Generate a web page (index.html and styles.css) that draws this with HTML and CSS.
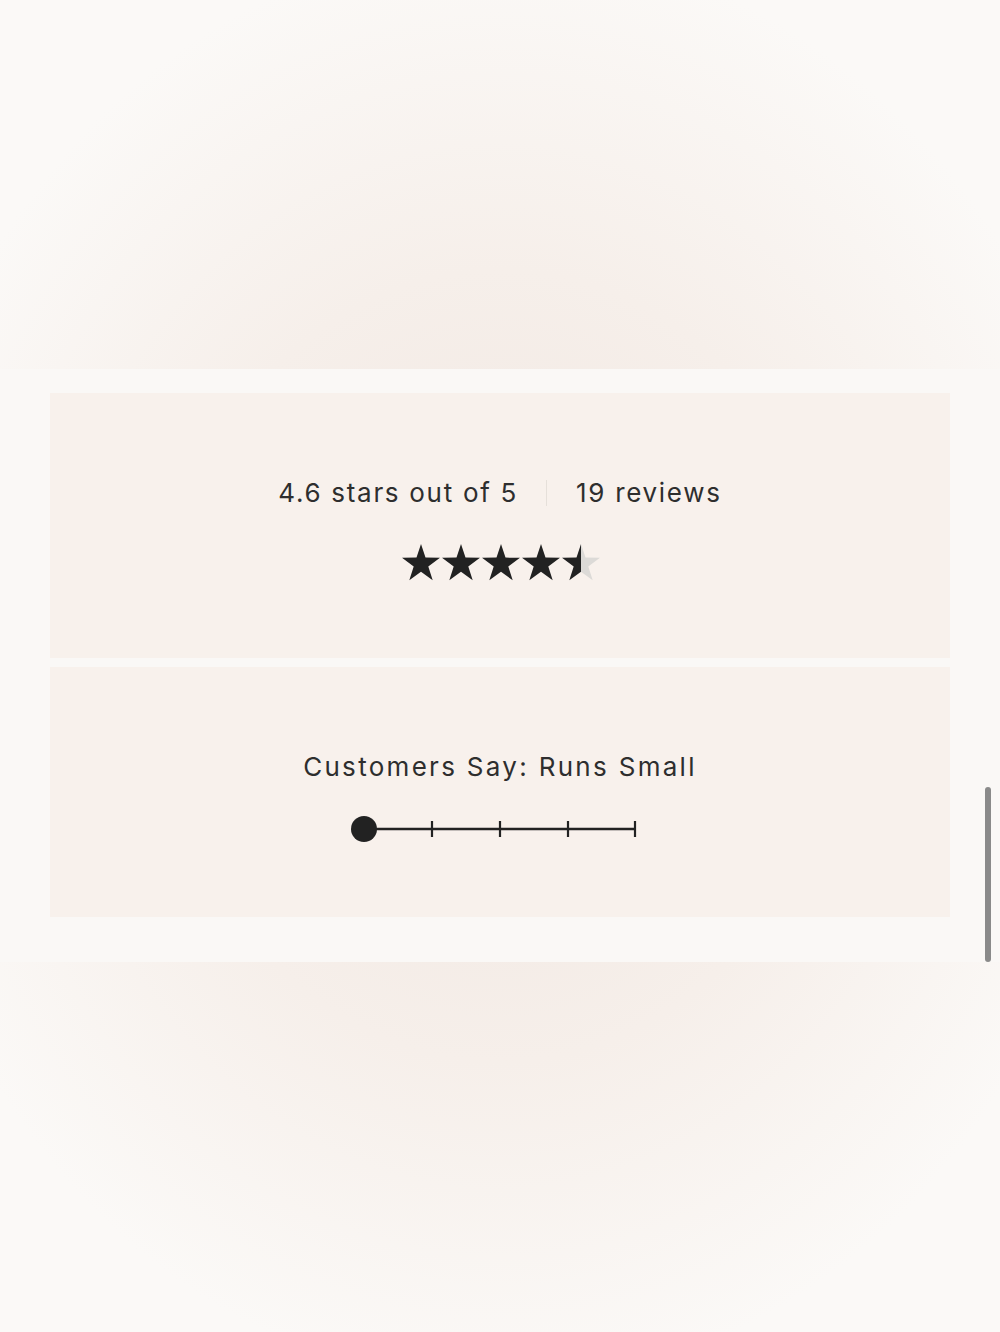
FILE: index.html
```html
<!DOCTYPE html>
<html>
<head>
<title>Reviews</title>
<link rel="stylesheet" href="styles.css">
</head>
<body>

<div class="band">
  <div class="panel rating">
    <div class="summary">
      <span>4.6 stars out of 5</span>
      <span class="sep"></span>
      <span>19 reviews</span>
    </div>
    <svg class="stars" width="198" height="38" viewBox="0 0 198 38">
      <defs>
        <path id="star" d="M19 0 L23.5 13.6 L38 13.8 L26.3 22.4 L30.7 36.3 L19 27.8 L7.3 36.3 L11.7 22.4 L0 13.8 L14.5 13.6 Z"/>
        <linearGradient id="part">
          <stop offset="50%" stop-color="#222"/>
          <stop offset="50%" stop-color="#dcdad7"/>
        </linearGradient>
      </defs>
      <use href="#star" x="0" fill="#222"/>
      <use href="#star" x="40" fill="#222"/>
      <use href="#star" x="80" fill="#222"/>
      <use href="#star" x="120" fill="#222"/>
      <use href="#star" x="160" fill="url(#part)"/>
    </svg>
  </div>

  <div class="panel fit">
    <div class="fit-title">Customers Say: Runs Small</div>
    <svg class="scale" width="300" height="30" viewBox="0 0 300 30">
      <line x1="14" y1="15" x2="286" y2="15" stroke="#222" stroke-width="2.4"/>
      <line x1="82" y1="7" x2="82" y2="23" stroke="#222" stroke-width="2.2"/>
      <line x1="150" y1="7" x2="150" y2="23" stroke="#222" stroke-width="2.2"/>
      <line x1="218" y1="7" x2="218" y2="23" stroke="#222" stroke-width="2.2"/>
      <line x1="285" y1="7" x2="285" y2="23" stroke="#222" stroke-width="2.2"/>
      <circle cx="14" cy="15" r="13" fill="#222"/>
    </svg>
  </div>
</div>

<div class="scrollbar"></div>

</body>
</html>
```

FILE: styles.css
```css
html, body { margin: 0; height: 1332px; }
body {
  background: radial-gradient(ellipse 620px 720px at 50% 50%, #f0e6e0 0%, #f6efea 55%, #fbf9f7 100%);
  font-family: "Inter", "Noto Sans", sans-serif;
  color: #2e2e2e;
  overflow: hidden;
}

.band {
  margin-top: 369px;
  height: 593px;
  box-sizing: border-box;
  padding: 24px 50px 0;
  background: #faf8f6;
  display: flex;
  flex-direction: column;
  gap: 9px;
}

.panel {
  background: #f8f1ec;
  display: flex;
  flex-direction: column;
  align-items: center;
}

.rating { height: 265px; padding-top: 84px; box-sizing: border-box; }
.fit    { height: 250px; padding-top: 84px; box-sizing: border-box; }

.summary {
  display: flex;
  align-items: center;
  font-size: 26px;
  letter-spacing: 1.7px;
  line-height: 32px;
}
.sep {
  width: 1px;
  height: 26px;
  background: #e6e0da;
  margin: 0 29px 0 28px;
}

.stars { margin-top: 35px; margin-left: 1px; }

.fit-title {
  font-size: 26px;
  letter-spacing: 2.3px;
  line-height: 32px;
}
.scale { margin-top: 31px; margin-left: -1px; }

.scrollbar {
  position: absolute;
  left: 985px;
  top: 787px;
  width: 6px;
  height: 175px;
  border-radius: 3px;
  background: #8a8a8a;
}
```
